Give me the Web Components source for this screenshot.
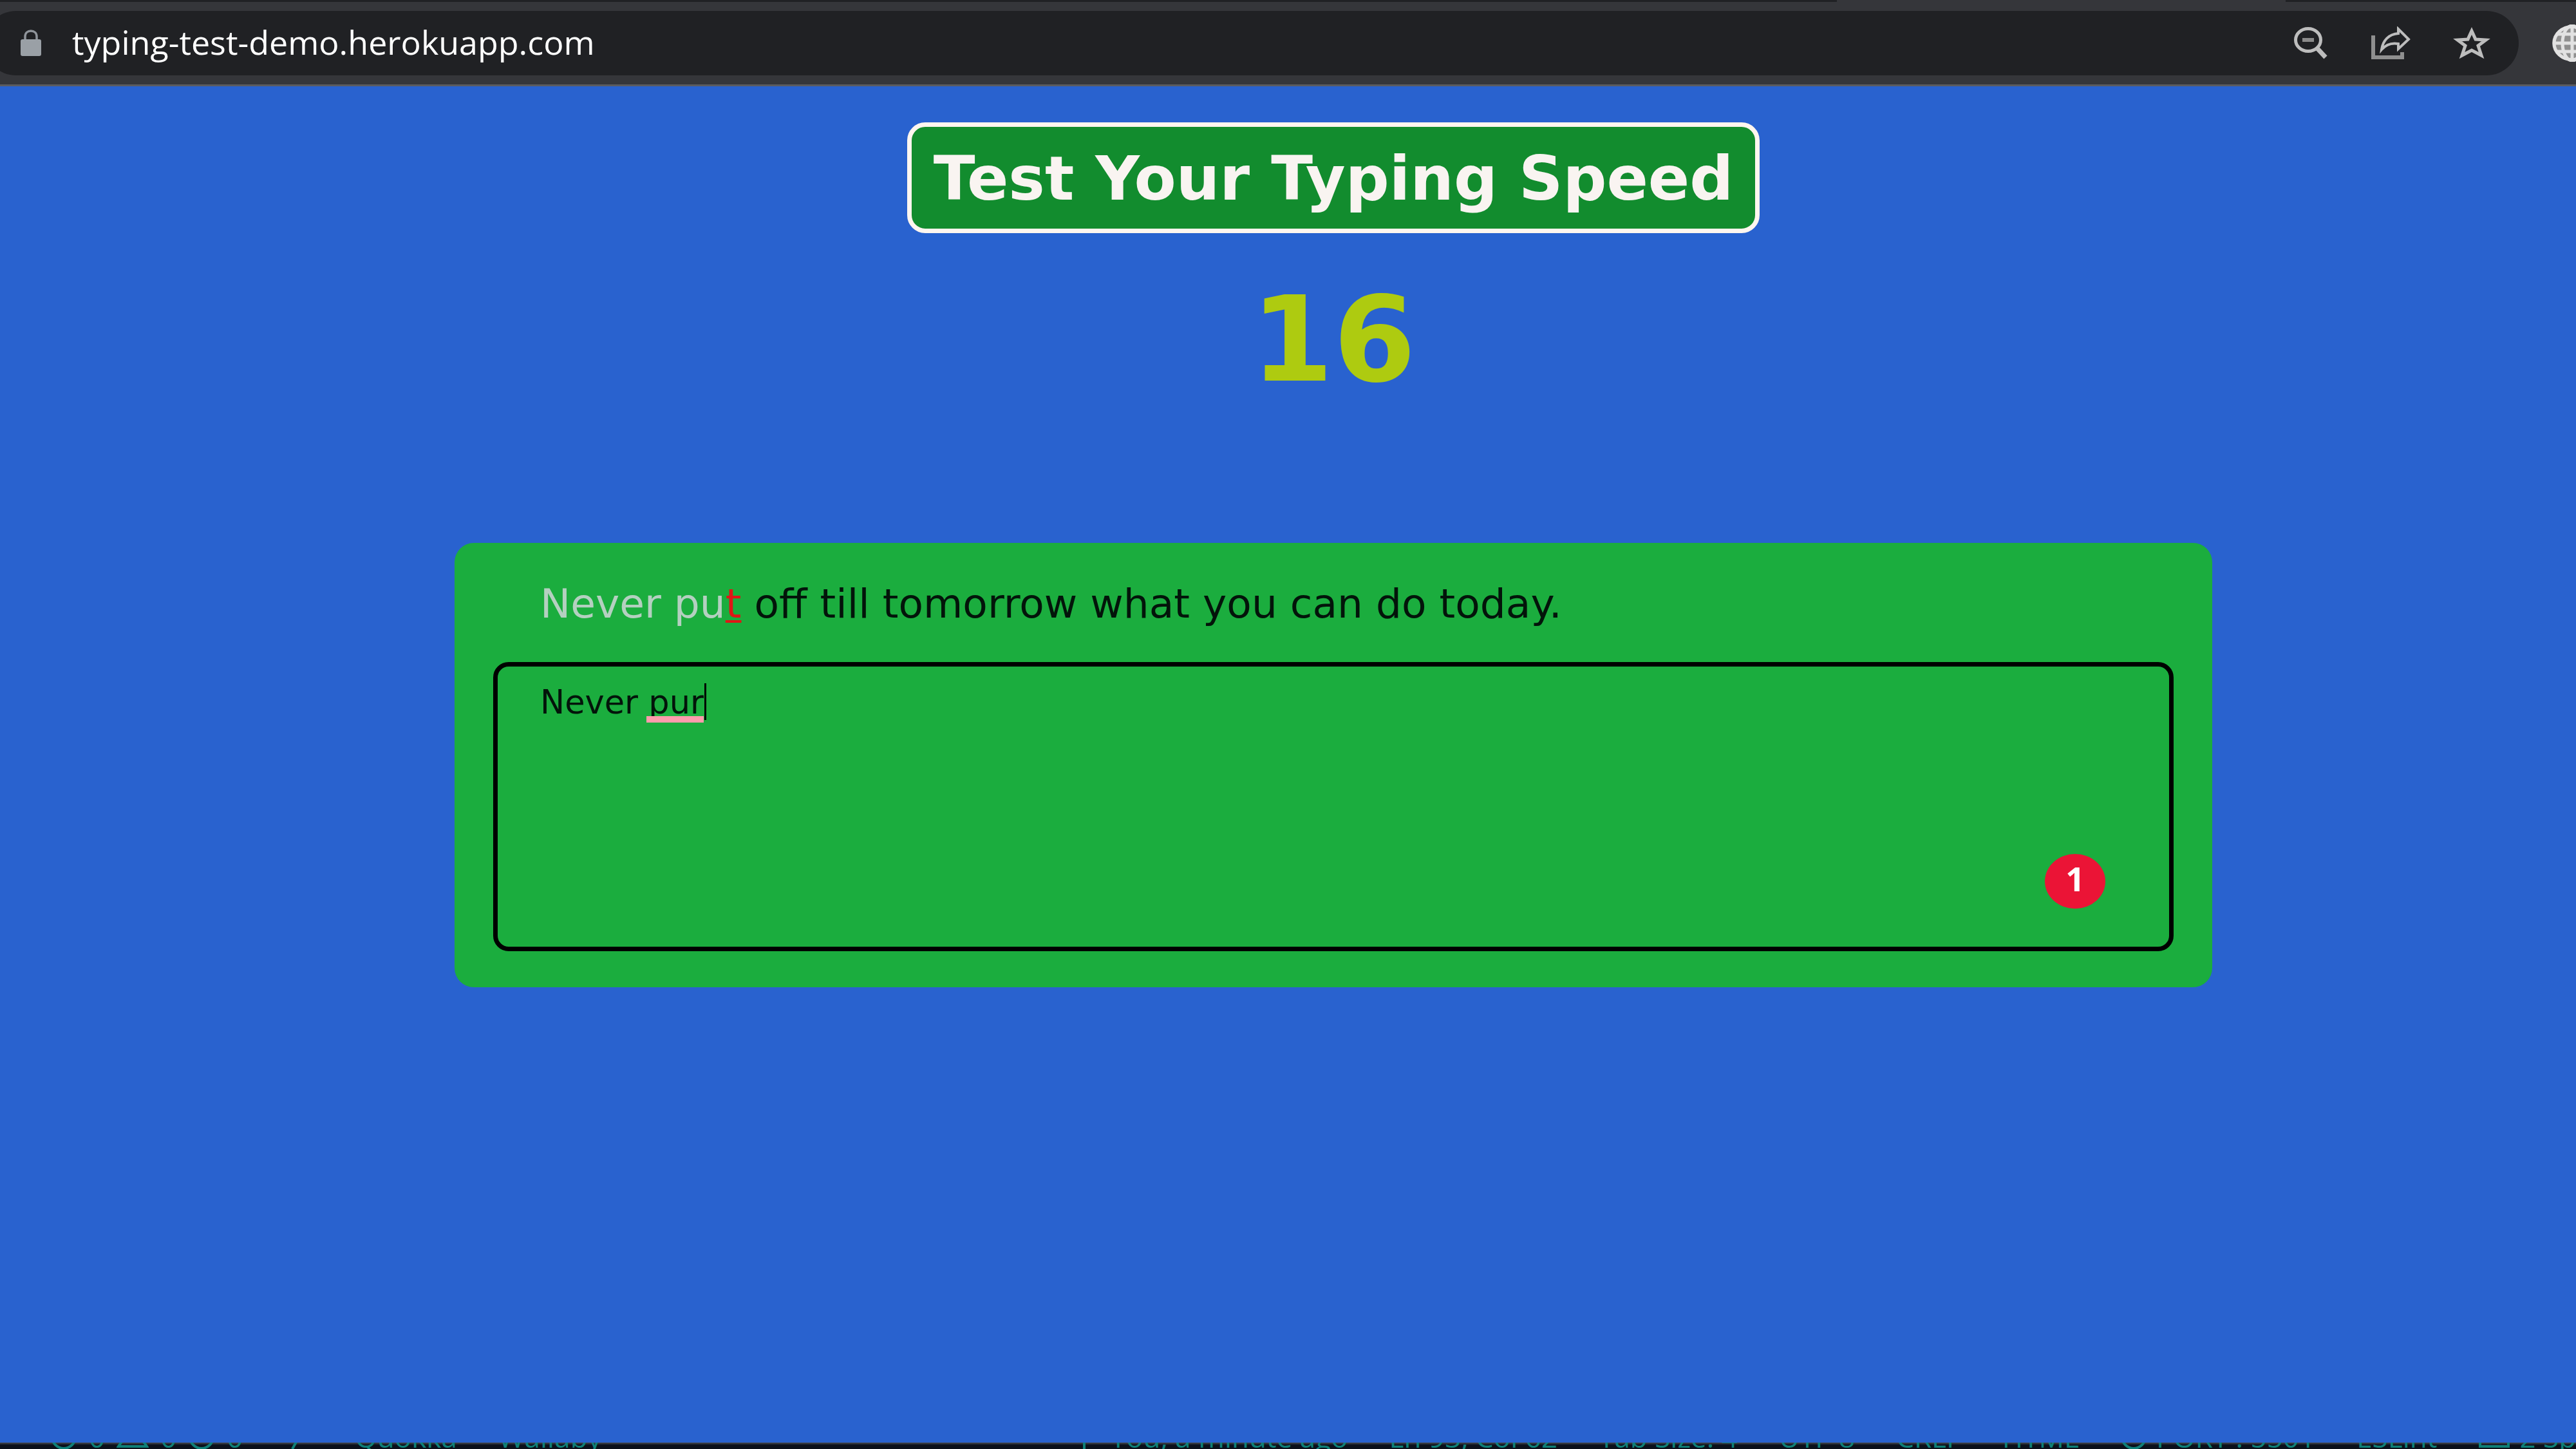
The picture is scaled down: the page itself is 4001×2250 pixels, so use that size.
<!DOCTYPE html>
<html lang="en">
<head>
<meta charset="utf-8">
<title>Test Your Typing Speed</title>
<style>
html,body{margin:0;height:100%}
body{background:#2962cf;overflow:hidden}
</style>
</head>
<body>
<typing-app></typing-app>
<script>
const define=(name,html)=>customElements.define(name,class extends HTMLElement{
  constructor(){
    super();
    const t=document.createElement('template');
    t.innerHTML=html;
    this.attachShadow({mode:'open'}).append(t.content.cloneNode(true));
  }
});

/* Browser toolbar with the address pill */
define('browser-bar',`
<style>
:host{display:block;background:#35363a;border-bottom:3px solid #5b5c5f;overflow:hidden}
.tabs{display:flex;height:3px;justify-content:space-between}
.tabs i{background:#202124}
.tabs i:first-child{width:2853px}
.tabs i:last-child{width:451px}
.row{display:flex;align-items:center;gap:52px;padding:14px 0;margin:0 -25px}
.pill{flex:1;display:flex;align-items:center;height:100px;border-radius:50px;background:#202124;box-sizing:border-box;padding:0 12px 0 57px}
.url{flex:1;height:72px;margin:0 0 4px 48px;min-width:0;border:0;padding:0;background:none;outline:0;color:#fff;font:500 52px/72px "Open Sans","Noto Sans",sans-serif}
.tools{display:flex;gap:3px}
button{border:0;background:none;padding:0;display:block}
svg{display:block}
.tools button{width:122px;display:flex;justify-content:center}
.globe{flex:none;width:62px}
</style>
<div class="tabs"><i></i><i></i></div>
<div class="row">
  <div class="pill">
    <svg width="32" height="42" viewBox="0 0 32 42"><path d="M7 17V11C7 5 11 2 16 2s9 3 9 9v6" fill="none" stroke="#8f949a" stroke-width="3.5"/><rect y="15" width="32" height="26" rx="3" fill="#9aa0a6"/></svg>
    <input class="url" aria-label="Address" value="typing-test-demo.herokuapp.com" spellcheck="false">
    <div class="tools">
      <button aria-label="Zoom"><svg width="56" height="52" viewBox="0 0 56 52" fill="none" stroke="#bdbdbd"><ellipse cx="24" cy="21" rx="19.5" ry="17.5" stroke-width="5"/><path d="M15 21h18" stroke="#8b8b8b" stroke-width="6"/><path d="M38 34L51 48" stroke-width="7"/></svg></button>
      <button aria-label="Share"><svg width="62" height="52" viewBox="0 0 62 52" fill="none"><path d="M3 14V48H48V40" stroke="#8f8f8f" stroke-width="6"/><path d="M16 36C18 22 27 12 42 11V4L58 20L42 35V27C31 25 23 28 16 36Z" stroke="#bdbdbd" stroke-width="4"/></svg></button>
      <button aria-label="Bookmark"><svg width="58" height="52" viewBox="0 0 58 52" fill="none"><path d="M29 7L35 20L51 21L39 30L44 45L29 37L14 45L19 30L7 21L23 20Z" stroke="#bdbdbd" stroke-width="5"/></svg></button>
    </div>
  </div>
  <svg class="globe" width="62" height="58" viewBox="0 0 62 58"><ellipse cx="31" cy="29" rx="31" ry="28" fill="#8f8f8f"/><g fill="none" stroke="#e2e2e2" stroke-width="5"><ellipse cx="31" cy="29" rx="28" ry="25.500"/><path d="M31 1V57M6 15H56M6 42H56M1 29H61"/><ellipse cx="31" cy="29" rx="15" ry="27"/></g></svg>
</div>`);

define('page-title',`
<style>
:host{display:block;box-sizing:border-box;border:7px solid #fff6ef;border-radius:28px;background:#128c2e;padding:22px 34px 20px}
h1{margin:0;color:#f9f4f1;font:bold 95px/116px "DejaVu Sans",sans-serif;white-space:nowrap;text-align:center}
</style>
<h1><slot></slot></h1>`);

define('count-down',`
<style>
:host{display:block;color:#aecb10;font:bold 184px/210px "DejaVu Sans",sans-serif}
</style>
<slot></slot>`);

/* Small round badge with the number of spelling problems */
define('error-badge',`
<style>
:host{display:flex;width:94px;height:85px;border-radius:50%;background:#eb1436;color:#fff;justify-content:center;font:bold 52px/76px "Open Sans",sans-serif}
</style>
<slot></slot>`);

define('typing-panel',`
<style>
:host{display:block;box-sizing:border-box;background:#1bad3e;border-radius:30px;padding:56px 60px;font-family:"DejaVu Sans",sans-serif;color:#03140a}
label{display:block;margin:0 73px 51px;font-size:63px;line-height:78px}
.ok{color:#b4d0c0}
.bad{color:#e01616;text-decoration:underline;text-decoration-thickness:4px;text-underline-offset:4px}
.field{position:relative;display:flex}
textarea{flex:1;height:449px;box-sizing:border-box;border:7px solid #000;border-radius:24px;background:none;padding:24px 66px;margin:0;resize:none;outline:0;color:inherit;font:51px/64px "DejaVu Sans",sans-serif}
.mark{position:absolute;left:238px;top:84px;width:89px;height:10px;background:#ff9bac}
.caret{position:absolute;left:328px;top:33px;width:3px;height:57px;background:#000}
error-badge{position:absolute;right:106px;bottom:66px}
</style>
<label for="entry"><span class="ok">Never pu</span><span class="bad">t</span> off till tomorrow what you can do today.</label>
<div class="field">
  <textarea id="entry" spellcheck="false">Never pur</textarea>
  <span class="mark"></span><span class="caret"></span>
  <error-badge>1</error-badge>
</div>`);

/* Editor status bar, its text running up under the browser window */
define('status-bar',`
<style>
:host{display:flex;align-items:flex-end;height:10px;overflow:hidden;background:linear-gradient(#4a4d55,#0b101b 4px);color:#0f8078;font:44px/60px "Open Sans","Noto Sans",sans-serif;white-space:nowrap}
div{display:flex;gap:64px;margin-bottom:-11px}
.group{display:flex;gap:18px;align-items:center}
svg{display:block;flex:none;fill:none;stroke:#0f8078;stroke-width:4}
.left{flex:0 0 42%;box-sizing:border-box;padding-left:78px}
.right{flex:1}
.branch{gap:36px}
.port{gap:14px}
</style>
<div class="left">
  <span class="group"><svg width="42" height="42"><circle cx="21" cy="21" r="18"/></svg>0<svg width="50" height="42"><path d="M25 4L47 36H3Z"/></svg>0<svg width="42" height="42"><circle cx="21" cy="21" r="18"/></svg>0</span>
  <span class="group"><svg width="46" height="42"><path d="M24 2L8 22H22L12 40"/></svg></span>
  <span>Quokka</span><span>Wallaby</span>
</div>
<div class="right">
  <span class="group branch"><svg width="8" height="46"><path d="M4 0V46"/></svg>You, a minute ago</span><span>Ln 93, Col 62</span><span>Tab Size: 4</span><span>UTF-8</span><span>CRLF</span><span>HTML</span>
  <span class="group port"><svg width="42" height="42"><circle cx="21" cy="21" r="18"/></svg>PORT : 5501</span>
  <span>ESLint</span>
  <span class="group port"><svg width="50" height="42"><path d="M3 4H47V36H3Z"/></svg>2 Spell</span>
</div>`);

define('typing-app',`
<style>
:host{display:flex;flex-direction:column;height:100vh}
main{flex:1;min-height:0;display:flex;flex-direction:column;align-items:center;padding:56px 0 0 141px}
count-down{margin:60px 0 211px}
typing-panel{width:90%;max-width:2730px}
</style>
<browser-bar></browser-bar>
<main>
  <page-title>Test Your Typing Speed</page-title>
  <count-down>16</count-down>
  <typing-panel></typing-panel>
</main>
<status-bar></status-bar>`);
</script>
</body>
</html>
